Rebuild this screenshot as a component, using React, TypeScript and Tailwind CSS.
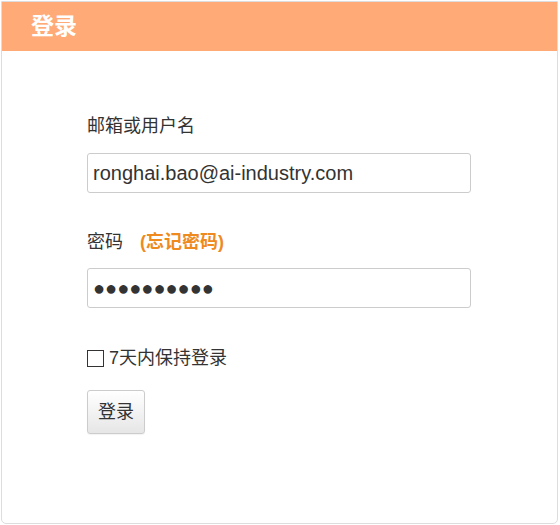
export default function App() {
  return (
    <div className="bg-white w-[560px] h-[525px] pt-px pl-px font-['Liberation_Sans','Noto_Sans_CJK_SC',sans-serif]">
      <div className="w-[557px] h-[523px] border border-[#dddddd] rounded-b-[5px] flex flex-col">
        {/* Header */}
        <div className="h-[49px] bg-[#ffaa77] flex items-center pl-[29px]">
          <span className="text-white text-[23px] font-bold">登录</span>
        </div>

        {/* Form */}
        <div className="pl-[85px] pt-[63px] w-[470px]">
          <label className="block text-[18px] text-[#333] leading-[24px]">邮箱或用户名</label>
          <input
            type="text"
            defaultValue="ronghai.bao@ai-industry.com"
            className="mt-[15px] w-[384px] h-[40px] border border-[#cccccc] rounded-[3px] px-[5px] text-[20px] text-[#333] outline-none"
          />

          <div className="mt-[37px] flex items-center text-[18px] leading-[24px]">
            <span className="text-[#333]">密码</span>
            <a className="ml-[17px] text-[#ee8a1e] font-bold">(忘记密码)</a>
          </div>
          <input
            type="text"
            readOnly
            defaultValue="●●●●●●●●●●"
            className="mt-[14px] w-[384px] h-[40px] border border-[#cccccc] rounded-[3px] px-[5px] text-[20px] text-[#333] outline-none"
          />

          <label className="mt-[40px] flex items-center gap-[5px] text-[18px] text-[#333] leading-[20px]">
            <span className="w-[17px] h-[17px] border border-[#333] bg-white" />
            7天内保持登录
          </label>

          <button className="mt-[22px] w-[58px] h-[44px] border border-[#cccccc] rounded-[3px] bg-gradient-to-b from-white to-[#e6e6e6] text-[18px] text-[#333] shadow-[0_1px_1px_rgba(0,0,0,0.05)]">
            登录
          </button>
        </div>
      </div>
    </div>
  );
}
